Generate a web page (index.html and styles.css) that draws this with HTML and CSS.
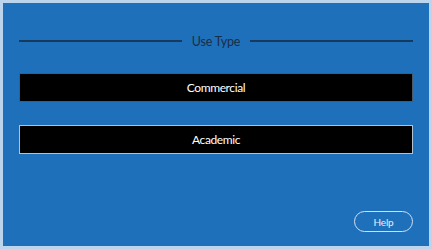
FILE: index.html
```html
<!DOCTYPE html>
<html lang="en">
<head>
    <meta charset="UTF-8">
    <title>Use Type</title>
    <link rel="stylesheet" href="styles.css">
</head>
<body>
    <div class="panel">
        <!-- Заголовок с линиями -->
        <div class="divider">
            <span class="divider-line"></span>
            <span class="divider-text">Use Type</span>
            <span class="divider-line"></span>
        </div>

        <button class="choice">Commercial</button>
        <button class="choice choice-active">Academic</button>

        <div class="footer">
            <button class="help-button">Help</button>
        </div>
    </div>
</body>
</html>
```

FILE: styles.css
```css
/* Базовые стили */
body {
    margin: 0;
    padding: 3px;
    width: 432px;
    height: 249px;
    box-sizing: border-box;
    background-color: #bcd4ec;
    font-family: Lato, "Open Sans", sans-serif;
}

.panel {
    height: 100%;
    box-sizing: border-box;
    background-color: #1f70ba;
    padding: 31px 16px 14px 16px;
    display: flex;
    flex-direction: column;
}

/* Заголовок */
.divider {
    display: flex;
    align-items: center;
    gap: 10px;
    height: 14px;
}

.divider-line {
    flex: 1;
    height: 2px;
    background-color: #163a5e;
}

.divider-text {
    color: #1a2d44;
    font-size: 12.5px;
    letter-spacing: -0.2px;
}

/* Кнопки выбора */
.choice {
    display: block;
    width: 100%;
    height: 29px;
    margin-top: 25px;
    background-color: #000;
    color: #fff;
    border: 1px solid #4c5a68;
    font-family: inherit;
    font-size: 12px;
    letter-spacing: -0.4px;
    cursor: pointer;
}

.choice + .choice {
    margin-top: 23px;
}

.choice-active {
    border-color: #b4c2d0;
}

/* Помощь */
.footer {
    margin-top: auto;
    display: flex;
    justify-content: flex-end;
}

.help-button {
    width: 59px;
    height: 21px;
    background: transparent;
    border: 1px solid #cfe0f2;
    border-radius: 11px;
    color: #e6eef7;
    font-family: inherit;
    font-size: 10px;
    letter-spacing: -0.2px;
    padding: 0;
    cursor: pointer;
}
```
